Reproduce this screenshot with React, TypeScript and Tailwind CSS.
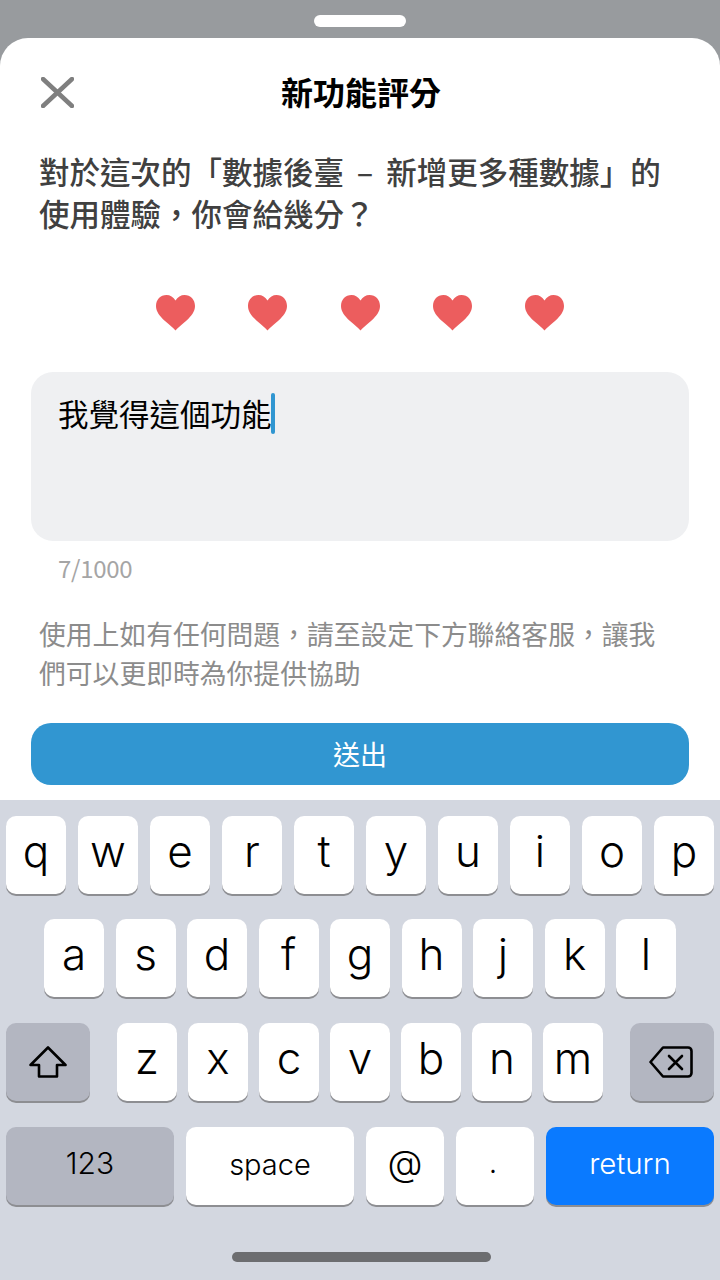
const cjk = "font-['Noto_Sans_CJK_TC',sans-serif]";

function Heart() {
  return (
    <svg width="39" height="36" viewBox="0 0 39 36" fill="#ec5d5e">
      <path d="M19.5 35.500C17 32.500 13 29.500 9 26C3.500 21 0 16.500 0 11C0 4.500 4.500 0 10.500 0C14 0 17.500 2 19.500 5.500C21.500 2 25 0 28.500 0C34.500 0 39 4.500 39 11C39 16.500 35.500 21 30 26C26 29.500 22 32.500 19.500 35.500Z" />
    </svg>
  );
}

function Key({ label, className = 'w-[60px]', textClass = 'text-[44px]', lift = '-translate-y-[4px]' }: { label: string; className?: string; textClass?: string; lift?: string }) {
  return (
    <div className={`${className} h-[78px] shrink-0 rounded-[10px] bg-white shadow-[0_2px_0_#8d8e92] flex items-center justify-center text-black font-['Inter',sans-serif] font-light leading-none ${textClass}`}>
      <span className={lift}>{label}</span>
    </div>
  );
}

function ShiftIcon() {
  return (
    <svg width="38" height="32" viewBox="0 0 38 32" fill="none" stroke="#000" strokeWidth="2.600" strokeLinejoin="round">
      <path d="M19 1.500L36.500 19H28V30.500H10V19H1.500Z" />
    </svg>
  );
}

function BackspaceIcon() {
  return (
    <svg className="-translate-x-[1px]" width="44" height="32" viewBox="0 0 44 32" fill="none" stroke="#000" strokeWidth="2.600" strokeLinejoin="round" strokeLinecap="round">
      <path d="M14 1.500H39A3.500 3.500 0 0 1 42.500 5V27A3.500 3.500 0 0 1 39 30.500H14L1.500 16Z" />
      <path d="M20 10L33 23M33 10L20 23" />
    </svg>
  );
}

export default function App() {
  return (
    <div className="w-[720px] h-[1280px] flex flex-col bg-[#989b9e] overflow-hidden">
      {/* Sheet handle */}
      <div className="h-[38px] shrink-0 flex items-start justify-center pt-[15px]">
        <div className="w-[92px] h-[12px] rounded-full bg-white" />
      </div>

      {/* Rating sheet */}
      <div className={`h-[762px] shrink-0 bg-white rounded-t-[28px] ${cjk}`}>
        <div className="relative h-[112px] flex items-start justify-center pt-[37px] pl-[2px]">
          <svg className="absolute left-[41px] top-[39px]" width="33" height="31" viewBox="0 0 33 31" fill="none" stroke="#7f7f7f" strokeWidth="4.500" strokeLinecap="round">
            <path d="M2 2L31 29M31 2L2 29" />
          </svg>
          <h1 className="text-[32px] leading-[32px] font-bold text-black">新功能評分</h1>
        </div>

        <p className="mx-[39px] text-[30.500px] leading-[42px] font-medium text-[#404040] whitespace-nowrap [word-spacing:6px]">
          對於這次的「數據後臺 – 新增更多種數據」的
          <br />
          使用體驗，你會給幾分？
        </p>

        <div className="mt-[61px] flex justify-center gap-[53.250px]">
          <Heart />
          <Heart />
          <Heart />
          <Heart />
          <Heart />
        </div>

        <div className="mt-[41px] mx-[31px] h-[169px] rounded-[22px] bg-[#eff0f2] px-[27px] pt-[21px]">
          <div className="flex items-start">
            <span className="text-[30.500px] leading-[41px] text-black">我覺得這個功能</span>
            <span className="w-[4px] h-[41px] -ml-[1px] rounded-full bg-[#3096d1]" />
          </div>
        </div>

        <p className="mt-[13px] ml-[58px] text-[24px] leading-[28px] tracking-[-0.3px] text-[#a5a5a5]">7/1000</p>

        <p className="mt-[32px] mx-[39px] text-[26.800px] leading-[39px] text-[#8c8c8c] whitespace-nowrap">
          使用上如有任何問題，請至設定下方聯絡客服，讓我
          <br />
          們可以更即時為你提供協助
        </p>

        <button className="mt-[31px] mx-[31px] w-[658px] h-[62px] rounded-[20px] bg-[#3196d1] text-[27px] text-white">
          送出
        </button>
      </div>

      {/* Keyboard */}
      <div className="flex-1 bg-[#d3d7e0] pt-[16px] flex flex-col">
        <div className="flex gap-[12px] px-[6px]">
          {['q', 'w', 'e', 'r', 't', 'y', 'u', 'i', 'o', 'p'].map((k) => (
            <Key key={k} label={k} />
          ))}
        </div>
        <div className="flex gap-[11.500px] pl-[44px] mt-[25px]">
          {['a', 's', 'd', 'f', 'g', 'h', 'j', 'k', 'l'].map((k) => (
            <Key key={k} label={k} />
          ))}
        </div>
        <div className="flex justify-between px-[6px] mt-[26px]">
          <div className="w-[84px] h-[78px] rounded-[10px] bg-[#b3b6c1] shadow-[0_2px_0_#8d8e92] flex items-center justify-center">
            <ShiftIcon />
          </div>
          <div className="flex gap-[11px]">
            {['z', 'x', 'c', 'v', 'b', 'n', 'm'].map((k) => (
              <Key key={k} label={k} />
            ))}
          </div>
          <div className="w-[84px] h-[78px] rounded-[10px] bg-[#b3b6c1] shadow-[0_2px_0_#8d8e92] flex items-center justify-center">
            <BackspaceIcon />
          </div>
        </div>
        <div className="flex gap-[12px] px-[6px] mt-[26px]">
          <div className="w-[168px] h-[78px] rounded-[10px] bg-[#b3b6c1] shadow-[0_2px_0_#8d8e92] flex items-center justify-center font-['Inter',sans-serif] font-light text-[30px] leading-none text-black">
            <span className="-translate-y-[3px]">123</span>
          </div>
          <Key label="space" className="w-[168px]" textClass="text-[29px]" lift="-translate-y-[2px]" />
          <Key label="@" className="w-[78px]" textClass="text-[36px]" lift="-translate-y-[3px]" />
          <Key label="." className="w-[78px]" textClass="text-[30px]" lift="-translate-x-[2px] -translate-y-[4px]" />
          <div className="w-[168px] h-[78px] rounded-[10px] bg-[#0a7aff] shadow-[0_2px_0_#8d8e92] flex items-center justify-center font-['Inter',sans-serif] font-light text-[29.500px] leading-none text-white">
            <span className="-translate-y-[2px]">return</span>
          </div>
        </div>
        <div className="mt-[47px] ml-[232px] w-[259px] h-[10px] rounded-full bg-[#6c6d70]" />
      </div>
    </div>
  );
}
